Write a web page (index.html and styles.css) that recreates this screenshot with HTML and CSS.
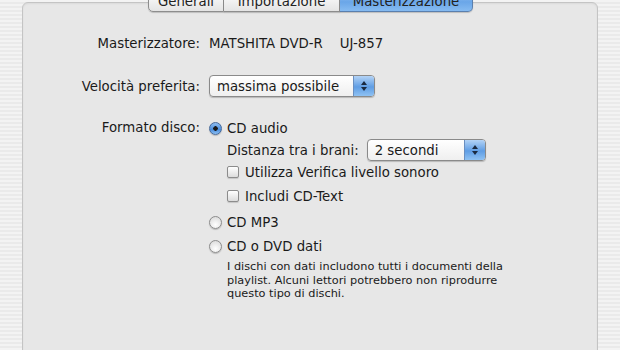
FILE: index.html
```html
<!DOCTYPE html>
<html lang="it">
<head>
    <meta charset="UTF-8">
    <title>Preferenze - Masterizzazione</title>
    <link rel="stylesheet" href="styles.css">
</head>
<body>
    <div class="window">
        <div class="tabs">
            <div class="tab tab-general">Generali</div>
            <div class="tab tab-import">Importazione</div>
            <div class="tab tab-burn selected">Masterizzazione</div>
        </div>
        <div class="panel">
            <div class="row row-burner">
                <div class="label">Masterizzatore:</div>
                <div class="value">MATSHITA DVD-R<span class="spacer"></span>UJ-857</div>
            </div>
            <div class="row row-speed">
                <div class="label">Velocità preferita:</div>
                <div class="popup popup-speed">
                    <span class="popup-text">massima possibile</span>
                    <span class="popup-arrows"><span class="up"></span><span class="down"></span></span>
                </div>
            </div>
            <div class="row row-format">
                <div class="label">Formato disco:</div>
                <div class="options">
                    <div class="option">
                        <span class="radio checked"></span>CD audio
                    </div>
                    <div class="sub">
                        <div class="gap-row">
                            <span>Distanza tra i brani:</span>
                            <div class="popup popup-gap">
                                <span class="popup-text">2 secondi</span>
                                <span class="popup-arrows"><span class="up"></span><span class="down"></span></span>
                            </div>
                        </div>
                        <div class="check-row">
                            <span class="checkbox"></span>Utilizza Verifica livello sonoro
                        </div>
                        <div class="check-row second">
                            <span class="checkbox"></span>Includi CD-Text
                        </div>
                    </div>
                    <div class="option mp3">
                        <span class="radio"></span>CD MP3
                    </div>
                    <div class="option data">
                        <span class="radio"></span>CD o DVD dati
                    </div>
                    <p class="note">I dischi con dati includono tutti i documenti della playlist. Alcuni lettori potrebbero non riprodurre questo tipo di dischi.</p>
                </div>
            </div>
        </div>
    </div>
</body>
</html>
```

FILE: styles.css
```css
body {
    margin: 0;
    height: 350px;
    overflow: hidden;
    font-family: "DejaVu Sans", sans-serif;
    font-size: 13.3px;
    color: #1a1a1a;
    background: repeating-linear-gradient(#f3f3f3 0, #f3f3f3 2px, #eaeaea 2px, #eaeaea 4px);
}
.window {
    padding-left: 22px;
    padding-top: 2px;
}
.tabs {
    display: flex;
    margin-left: 126px;
    margin-top: -12px;
    height: 22px;
    position: relative;
    z-index: 1;
}
.tab {
    display: flex;
    align-items: flex-end;
    justify-content: center;
    height: 22px;
    box-sizing: border-box;
    padding-bottom: 2px;
    border: 1px solid #8d8d8d;
    border-left: none;
    background: linear-gradient(#ffffff, #e4e4e4);
    color: #222;
    box-shadow: 0 1px 1px rgba(0, 0, 0, 0.18);
}
.tab-general {
    width: 76px;
    border-left: 1px solid #8d8d8d;
    border-radius: 0 0 0 5px;
}
.tab-import {
    width: 116px;
}
.tab-burn {
    width: 133px;
    border-radius: 0 0 5px 0;
}
.tab.selected {
    background: linear-gradient(#9ec6f2, #6aa6e8 55%, #86bbf1);
    border-color: #5a7fae;
}
.panel {
    margin-top: -10px;
    width: 576px;
    height: 400px;
    border: 1px solid #c4c4c4;
    border-radius: 6px;
    background: #e7e7e7;
    box-shadow: inset 0 1px 2px rgba(0, 0, 0, 0.06);
    padding-top: 31px;
    box-sizing: border-box;
}
.row {
    display: flex;
    align-items: center;
}
.label {
    width: 177px;
    text-align: right;
    padding-right: 9px;
    flex-shrink: 0;
}
.spacer {
    display: inline-block;
    width: 17px;
}
.row-burner {
    height: 18px;
}
.row-speed {
    margin-top: 23px;
    height: 22px;
}
.row-format {
    margin-top: 22px;
    align-items: flex-start;
}
.row-format .label {
    line-height: 18px;
}
.popup {
    display: flex;
    align-items: center;
    height: 22px;
    box-sizing: border-box;
    border: 1px solid #8a8a8a;
    border-radius: 4px;
    background: linear-gradient(#ffffff, #efefef);
    box-shadow: 0 1px 1px rgba(0, 0, 0, 0.2);
    overflow: hidden;
}
.popup-text {
    flex: 1;
    padding-left: 7px;
}
.popup-speed {
    width: 166px;
}
.popup-gap {
    width: 119px;
    margin-left: 8px;
}
.popup-arrows {
    display: flex;
    flex-direction: column;
    align-items: center;
    justify-content: center;
    gap: 2px;
    width: 20px;
    height: 20px;
    border-left: 1px solid #6a8fc0;
    background: linear-gradient(#b3d3f6, #5f9de4 55%, #8fc2f3);
}
.up {
    border-left: 3px solid transparent;
    border-right: 3px solid transparent;
    border-bottom: 4px solid #1b2a40;
}
.down {
    border-left: 3px solid transparent;
    border-right: 3px solid transparent;
    border-top: 4px solid #1b2a40;
}
.options {
    display: flex;
    flex-direction: column;
}
.option {
    display: flex;
    align-items: center;
    height: 18px;
}
.radio {
    width: 11px;
    height: 11px;
    border: 1px solid #8c8c8c;
    border-radius: 50%;
    background: radial-gradient(circle at 50% 70%, #ffffff, #d6d6d6);
    margin-right: 5px;
    box-shadow: 0 1px 1px rgba(0, 0, 0, 0.2);
}
.radio.checked {
    border-color: #46699a;
    background: radial-gradient(circle, #1a1a1a 0, #1a1a1a 2px, transparent 2.5px), linear-gradient(#8fbdf0, #4b8ddc 60%, #8cc0f4);
}
.sub {
    padding-left: 18px;
}
.gap-row {
    display: flex;
    align-items: center;
    margin-top: 2px;
    height: 22px;
}
.check-row {
    display: flex;
    align-items: center;
    height: 18px;
    margin-top: 2px;
}
.check-row.second {
    margin-top: 6px;
}
.checkbox {
    width: 10px;
    height: 10px;
    border: 1px solid #8c8c8c;
    border-radius: 2px;
    background: linear-gradient(#ffffff, #dcdcdc);
    margin-right: 6px;
    box-shadow: 0 1px 1px rgba(0, 0, 0, 0.15);
}
.mp3 {
    margin-top: 8px;
}
.data {
    margin-top: 6px;
}
.note {
    margin: 5px 0 0 18px;
    width: 284px;
    font-size: 11.3px;
    line-height: 13.5px;
}
```
